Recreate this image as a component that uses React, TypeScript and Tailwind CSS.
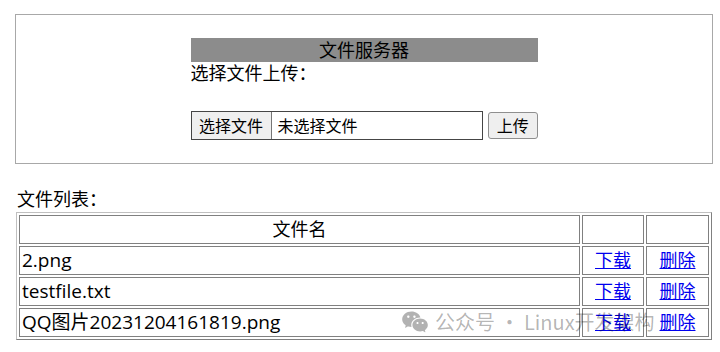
import { RiWechatFill } from 'react-icons/ri';

const files = ['2.png', 'testfile.txt', 'QQ图片20231204161819.png'];

export default function App() {
  return (
    <div className="relative w-[720px] h-[352px] overflow-hidden bg-white text-black text-[18px] font-['Open_Sans','Noto_Sans_CJK_SC',sans-serif]">
      {/* upload box */}
      <div className="pt-[14px] pl-[15px]">
        <div className="w-[698px] h-[150px] border border-[#a8a8a8] flex justify-center pt-[23px]">
          <div className="w-[347px]">
            <div className="h-[24px] leading-[24px] bg-[#8c8c8c] text-center">文件服务器</div>
            <div className="h-[24px] leading-[22px]">选择文件上传：</div>
            <div className="h-[24px]" />
            <div className="mt-[1px] flex items-center">
              <div className="flex w-[294px] h-[29px] border border-[#454545] text-[16px]">
                <div className="w-[80px] h-full flex items-center justify-center bg-[#efefef] border-r border-[#767676]">
                  选择文件
                </div>
                <div className="flex items-center pl-[6px]">未选择文件</div>
              </div>
              <button className="ml-[5px] w-[50px] h-[27px] flex items-center justify-center text-[16px] bg-[#efefef] border border-[#8f8f8f] rounded-[3px]">
                上传
              </button>
            </div>
          </div>
        </div>
      </div>

      {/* file list */}
      <div className="mt-[24px] ml-[17px] h-[24px] leading-[22px]">文件列表：</div>
      <table className="ml-[16px] w-[696px] border-separate border-spacing-[2px] border border-t-[#c0c0c0] border-l-[#c0c0c0] border-r-[#808080] border-b-[#808080]">
        <tbody>
          <tr>
            <td className="w-[561px] h-[29px] p-0 pb-[2px] text-center leading-[24px] border border-[#808080]">文件名</td>
            <td className="w-[62px] h-[29px] p-0 border border-[#808080]" />
            <td className="w-[63px] h-[29px] p-0 border border-[#808080]" />
          </tr>
          {files.map((name) => (
            <tr key={name}>
              <td className="h-[29px] p-0 pb-[2px] pl-[2px] text-[19px] leading-[24px] border border-[#808080]">{name}</td>
              <td className="h-[29px] p-0 pb-[2px] text-center leading-[24px] border border-[#808080]">
                <a href="#" className="text-[#0000ee] underline">下载</a>
              </td>
              <td className="h-[29px] p-0 pb-[2px] text-center leading-[24px] border border-[#808080]">
                <a href="#" className="text-[#0000ee] underline">删除</a>
              </td>
            </tr>
          ))}
        </tbody>
      </table>

      {/* watermark */}
      <div className="absolute left-[401px] top-[308px] flex items-center gap-[6px] whitespace-nowrap text-black/30 text-[20px] leading-[28px] font-['Noto_Sans_CJK_SC',sans-serif] pointer-events-none">
        <RiWechatFill className="w-[28px] h-[28px]" />
        <span>公众号 · Linux开发架构</span>
      </div>
    </div>
  );
}
